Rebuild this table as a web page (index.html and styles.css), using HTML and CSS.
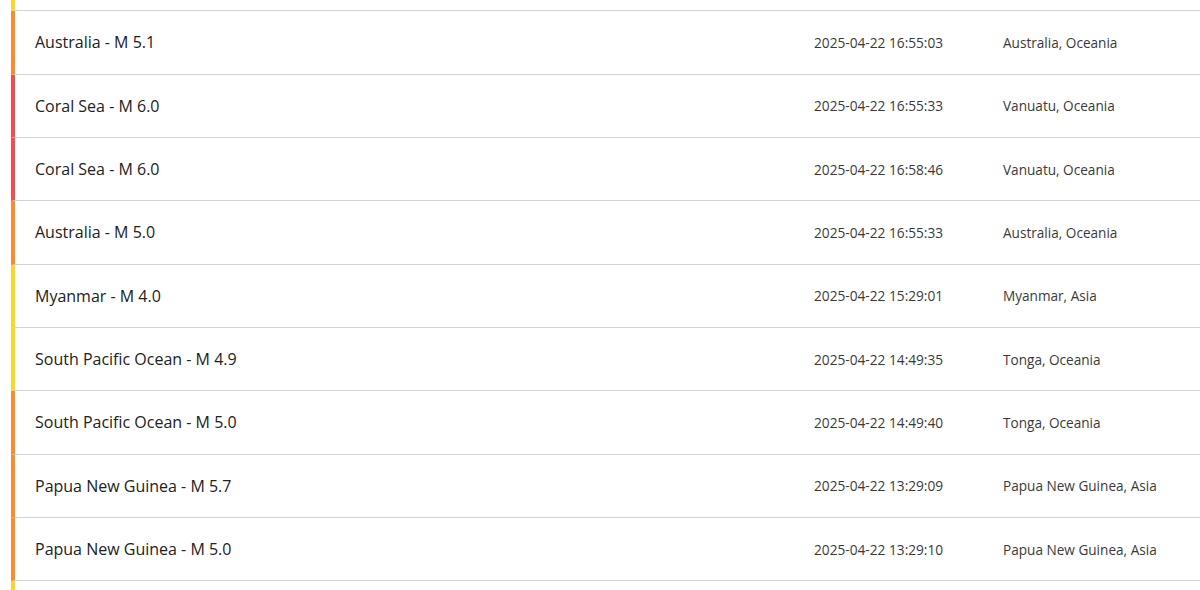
FILE: index.html
```html
<!DOCTYPE html>
<html lang="en">
<head>
<meta charset="utf-8">
<title>Earthquakes</title>
<link rel="stylesheet" href="styles.css">
</head>
<body>
<ul class="feed">
  <li class="row stub mag-yellow"></li>
  <li class="row mag-orange"><span class="title">Australia - M 5.1</span><span class="time">2025-04-22 16:55:03</span><span class="place">Australia, Oceania</span></li>
  <li class="row mag-red"><span class="title">Coral Sea - M 6.0</span><span class="time">2025-04-22 16:55:33</span><span class="place">Vanuatu, Oceania</span></li>
  <li class="row mag-red"><span class="title">Coral Sea - M 6.0</span><span class="time">2025-04-22 16:58:46</span><span class="place">Vanuatu, Oceania</span></li>
  <li class="row mag-orange"><span class="title">Australia - M 5.0</span><span class="time">2025-04-22 16:55:33</span><span class="place">Australia, Oceania</span></li>
  <li class="row mag-yellow"><span class="title">Myanmar - M 4.0</span><span class="time">2025-04-22 15:29:01</span><span class="place">Myanmar, Asia</span></li>
  <li class="row mag-yellow"><span class="title">South Pacific Ocean - M 4.9</span><span class="time">2025-04-22 14:49:35</span><span class="place">Tonga, Oceania</span></li>
  <li class="row mag-orange"><span class="title">South Pacific Ocean - M 5.0</span><span class="time">2025-04-22 14:49:40</span><span class="place">Tonga, Oceania</span></li>
  <li class="row mag-orange"><span class="title">Papua New Guinea - M 5.7</span><span class="time">2025-04-22 13:29:09</span><span class="place">Papua New Guinea, Asia</span></li>
  <li class="row mag-orange"><span class="title">Papua New Guinea - M 5.0</span><span class="time">2025-04-22 13:29:10</span><span class="place">Papua New Guinea, Asia</span></li>
  <li class="row stub-end mag-yellow"></li>
</ul>
</body>
</html>
```

FILE: styles.css
```css
html, body {
  margin: 0;
  padding: 0;
  background: #ffffff;
  overflow: hidden;
}

body {
  font-family: "Open Sans", "Noto Sans", "Liberation Sans", sans-serif;
  color: #2b2b2b;
}

.feed {
  list-style: none;
  margin: 0 0 0 11px;
  padding: 0;
}

.row {
  box-sizing: border-box;
  height: 63.333px;
  display: flex;
  align-items: center;
  border-left: 4px solid transparent;
  border-bottom: 1px solid #d4d4d4;
  padding: 0 20px;
}

.row.stub {
  height: 11.333px;
}

.row.stub-end {
  height: 20px;
  border-bottom: none;
}

.mag-yellow { border-left-color: #fbd52a; }
.mag-orange { border-left-color: #fd8a2c; }
.mag-red { border-left-color: #f44d4f; }

.title {
  flex: 1;
  font-size: 16px;
  color: #222;
}

.time {
  width: 189px;
  font-size: 13.7px;
  color: #3a3a3a;
}

.place {
  width: 177px;
  font-size: 13.6px;
  color: #3a3a3a;
}
```
